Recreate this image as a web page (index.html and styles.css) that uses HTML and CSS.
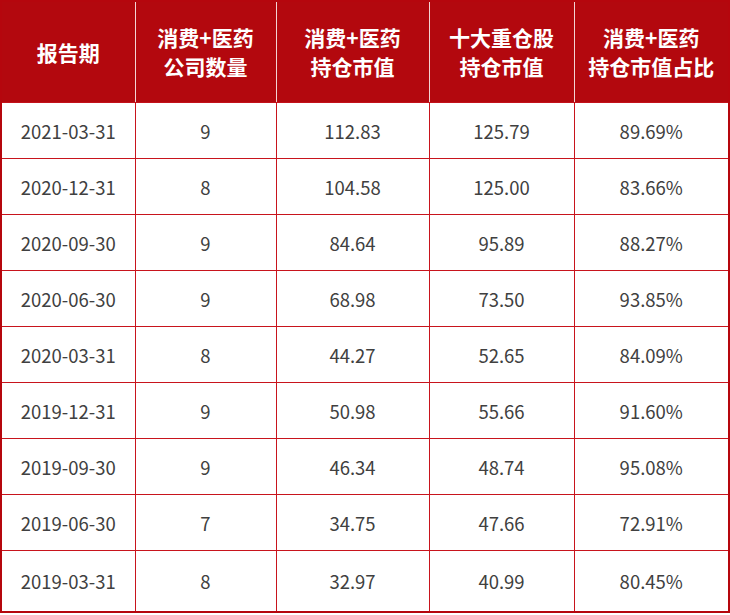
FILE: index.html
```html
<!DOCTYPE html>
<html lang="zh">
<head>
<meta charset="utf-8">
<link rel="stylesheet" href="styles.css">
</head>
<body>
<table class="data">
  <colgroup>
    <col class="c1"><col class="c2"><col class="c3"><col class="c4"><col class="c5">
  </colgroup>
  <thead>
    <tr>
      <th>报告期</th>
      <th>消费+医药<br>公司数量</th>
      <th>消费+医药<br>持仓市值</th>
      <th>十大重仓股<br>持仓市值</th>
      <th>消费+医药<br>持仓市值占比</th>
    </tr>
  </thead>
  <tbody>
    <tr><td>2021-03-31</td><td>9</td><td>112.83</td><td>125.79</td><td>89.69%</td></tr>
    <tr><td>2020-12-31</td><td>8</td><td>104.58</td><td>125.00</td><td>83.66%</td></tr>
    <tr><td>2020-09-30</td><td>9</td><td>84.64</td><td>95.89</td><td>88.27%</td></tr>
    <tr><td>2020-06-30</td><td>9</td><td>68.98</td><td>73.50</td><td>93.85%</td></tr>
    <tr><td>2020-03-31</td><td>8</td><td>44.27</td><td>52.65</td><td>84.09%</td></tr>
    <tr><td>2019-12-31</td><td>9</td><td>50.98</td><td>55.66</td><td>91.60%</td></tr>
    <tr><td>2019-09-30</td><td>9</td><td>46.34</td><td>48.74</td><td>95.08%</td></tr>
    <tr><td>2019-06-30</td><td>7</td><td>34.75</td><td>47.66</td><td>72.91%</td></tr>
    <tr class="last"><td>2019-03-31</td><td>8</td><td>32.97</td><td>40.99</td><td>80.45%</td></tr>
  </tbody>
</table>
</body>
</html>
```

FILE: styles.css
```css
html, body {
  margin: 0;
  padding: 0;
  background: #ffffff;
}

.data {
  border-collapse: collapse;
  table-layout: fixed;
  width: 728px;
  border: 2px solid #b5060d;
  font-family: "Noto Sans CJK SC", "Noto Sans", sans-serif;
}

.c1 { width: 134px; }
.c2 { width: 141px; }
.c3 { width: 153px; }
.c4 { width: 145px; }
.c5 { width: 155px; }

.data th {
  background: #b3080e;
  color: #ffffff;
  font-weight: 700;
  font-size: 21px;
  line-height: 29px;
  height: 100px;
  padding: 0;
  text-align: center;
  vertical-align: middle;
  border-left: 1px solid #f2d4d4;
  border-right: 1px solid #f2d4d4;
  border-bottom: 1px solid #c3121a;
}

.data th:first-child { border-left: 2px solid #b5060d; }
.data th:last-child { border-right: 2px solid #b5060d; }

.data td {
  height: 55px;
  padding: 0;
  text-align: center;
  vertical-align: middle;
  color: #404040;
  font-size: 18.5px;
  font-weight: 400;
  border: 1px solid #c8141d;
}

.data td:first-child { border-left: 2px solid #b5060d; }
.data td:last-child { border-right: 2px solid #b5060d; }

.data tr.last td {
  height: 60px;
  border-bottom: 2px solid #b5060d;
}
```
